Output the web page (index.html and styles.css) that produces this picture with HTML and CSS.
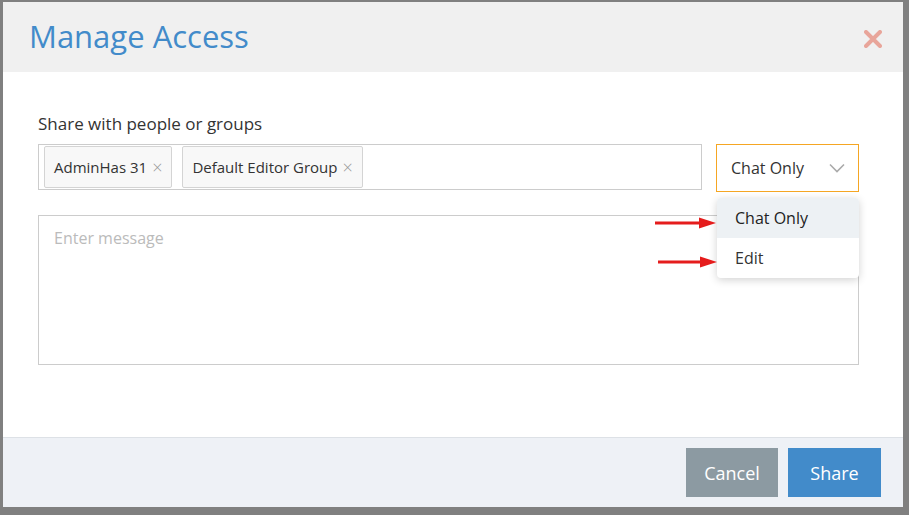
FILE: index.html
```html
<!DOCTYPE html>
<html lang="en">
<head>
    <meta charset="UTF-8">
    <meta name="viewport" content="width=device-width, initial-scale=1.0">
    <title>Manage Access</title>
    <link rel="stylesheet" href="styles.css">
</head>
<body>

<div class="modal">
    <div class="modal-header">
        <h1>Manage Access</h1>
        <span class="close">
            <svg width="18" height="18" viewBox="0 0 18 18"><path d="M2 2L16 16M16 2L2 16" stroke="#e8a59a" stroke-width="4" stroke-linecap="round"/></svg>
        </span>
    </div>

    <div class="modal-body">
        <div class="label">Share with people or groups</div>
        <div class="share-row">
            <div class="tags-input">
                <span class="tag">AdminHas 31 <span class="tag-x">×</span></span>
                <span class="tag">Default Editor Group <span class="tag-x">×</span></span>
            </div>
            <div class="select">
                <span>Chat Only</span>
                <svg width="16" height="10" viewBox="0 0 16 10"><path d="M1 1.5L8 8.5L15 1.5" fill="none" stroke="#aaa" stroke-width="1.6"/></svg>
                <ul class="menu">
                    <li class="active">Chat Only</li>
                    <li>Edit</li>
                </ul>
                <svg class="arrow arrow-1" width="62" height="12" viewBox="0 0 62 12"><path d="M0 6H46" stroke="#e51c1c" stroke-width="3"/><path d="M44 0.5L61 6L44 11.5Z" fill="#e51c1c"/></svg>
                <svg class="arrow arrow-2" width="60" height="12" viewBox="0 0 60 12"><path d="M0 6H44" stroke="#e51c1c" stroke-width="3"/><path d="M42 0.5L59 6L42 11.5Z" fill="#e51c1c"/></svg>
            </div>
        </div>
        <textarea class="message" placeholder="Enter message"></textarea>
    </div>

    <div class="modal-footer">
        <button class="btn btn-cancel">Cancel</button>
        <button class="btn btn-share">Share</button>
    </div>
</div>

</body>
</html>
```

FILE: styles.css
```css
* { box-sizing: border-box; }
html, body { margin: 0; height: 100%; }
body { background: #808080; font-family: "Open Sans", sans-serif; overflow: hidden; }

.modal { width: 900px; height: 505px; margin: 2px 0 0 3px; background: #fff; display: flex; flex-direction: column; }

.modal-header { height: 70px; background: #f0f0f0; display: flex; align-items: center; justify-content: space-between; padding: 0 21px 0 26px; }
.modal-header h1 { margin: 0 0 2px; font-size: 31px; font-weight: 400; color: #428bca; }
.close { display: flex; margin-top: 3px; }

.modal-body { flex: 1; padding: 40px 44px 0 35px; }
.label { font-size: 17px; line-height: 24px; color: #333; margin-bottom: 8px; }

.share-row { display: flex; gap: 14px; align-items: flex-start; }
.tags-input { flex: 1; height: 46px; border: 1px solid #ccc; display: flex; align-items: center; gap: 10px; padding: 0 5px; }
.tag { height: 42px; display: flex; align-items: center; padding: 0 9px; border: 1px solid #d4d4d4; border-radius: 2px; background: #f8f8f8; font-size: 15px; color: #333; }
.tag-x { color: #999; font-size: 18px; font-weight: 300; margin-left: 5px; line-height: 1; }

.select { position: relative; width: 143px; height: 48px; border: 1px solid #f5a623; display: flex; align-items: center; justify-content: space-between; padding: 0 13px 0 14px; font-size: 16px; color: #333; }
.menu { position: absolute; top: 53px; left: 0; width: 142px; margin: 0; padding: 0; list-style: none; background: #fff; border-radius: 4px; box-shadow: 0 2px 8px rgba(0, 0, 0, 0.18); z-index: 2; overflow: hidden; }
.menu li { height: 40px; line-height: 40px; padding-left: 18px; font-size: 16px; color: #333; }
.menu li.active { background: #edf1f4; color: #222; font-weight: 500; }
.arrow { position: absolute; z-index: 3; }
.arrow-1 { top: 72px; left: -62px; }
.arrow-2 { top: 111px; left: -59px; }

.message { display: block; width: 821px; height: 150px; margin-top: 23px; border: 1px solid #ccc; padding: 11px 15px; font-family: "Open Sans", sans-serif; font-size: 16px; resize: none; outline: none; }
.message::placeholder { color: #bbb; }

.modal-footer { height: 70px; background: #eef1f6; border-top: 1px solid #dde1e6; display: flex; justify-content: flex-end; align-items: flex-start; gap: 10px; padding: 10px 22px 0 0; }
.btn { height: 49px; border: none; color: #fff; font-family: "Open Sans", sans-serif; font-size: 18px; padding: 0; cursor: pointer; }
.btn-cancel { width: 92px; background: #8c9aa2; }
.btn-share { width: 93px; background: #428bca; }
```
